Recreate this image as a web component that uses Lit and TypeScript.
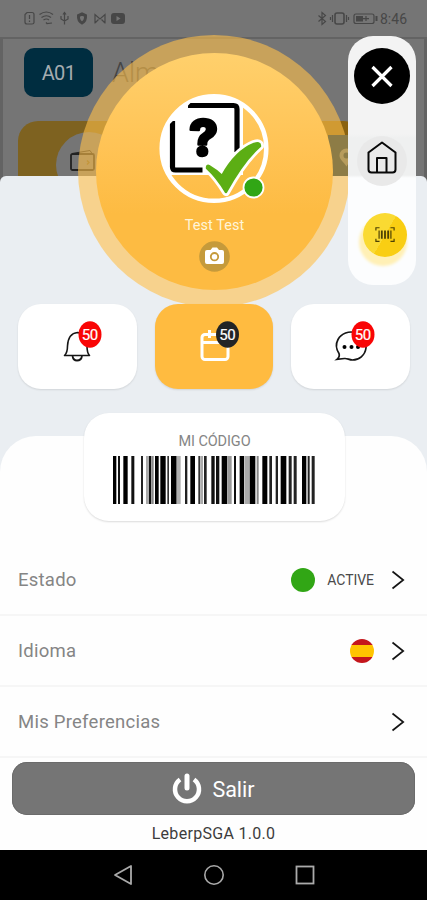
import { LitElement, html, css, svg } from "lit";
import { customElement, property } from "lit/decorators.js";

// [start, width, shade] in thirds of a pixel
const BARS: [number, number, string][] = [
  [0, 10, "#000"], [15, 6, "#111"], [31, 13, "#000"], [55, 9, "#111"], [84, 6, "#222"],
  [99, 6, "#aaa"], [107, 8, "#111"], [116, 6, "#888"], [126, 11, "#000"], [142, 16, "#000"],
  [163, 5, "#333"], [174, 17, "#000"], [191, 12, "#b0b0b0"], [216, 7, "#222"], [232, 14, "#000"],
  [256, 6, "#333"], [264, 6, "#aaa"], [273, 8, "#222"], [295, 10, "#111"], [309, 10, "#111"],
  [326, 17, "#000"], [345, 11, "#999"], [363, 6, "#111"], [380, 13, "#000"], [394, 15, "#aaa"],
  [410, 17, "#000"], [431, 6, "#888"], [448, 15, "#000"], [469, 8, "#222"], [488, 7, "#222"],
  [503, 17, "#000"], [527, 9, "#222"], [542, 9, "#222"], [567, 13, "#000"], [584, 6, "#222"],
  [596, 9, "#222"],
];

@customElement("notice-tile")
class NoticeTile extends LitElement {
  @property() kind = "bell";
  static styles = css`
    :host { display: block; flex: 1; height: 85px; }
    .tile { height: 85px; border-radius: 23px; background: #fff; box-shadow: 0 1px 2px #0000001c; display: flex; justify-content: center; }
    .accent { background: #ffbb40; }
    .icon { width: 44px; height: 46px; margin: 17px 0 0 7px; }
    .badge { fill: #f90505; }
    .dark { fill: #222426; }
    text { font: 400 15px Roboto, sans-serif; fill: #fff; stroke: #fff; stroke-width: .2px; text-anchor: middle; letter-spacing: -.6px; }
  `;
  render() {
    const art =
      this.kind === "bell"
        ? svg`<path d="M5.500 34.500h25c-2-2-2.500-5-2.500-9.500-.500-9-4-13-9.500-13.500-6 .5-9.500 4.500-10 13.500 0 5-.8 7.500-3 9.500z" fill="none" stroke="#151515" stroke-width="1.600" stroke-linejoin="round"/>
              <path d="M13.500 35c.5 3 2 4.500 4.500 4.500s4.500-1.500 5-4.500" fill="none" stroke="#151515" stroke-width="1.800"/>`
        : this.kind === "calendar"
          ? svg`<g fill="none" stroke="#fff" stroke-width="3"><rect x="6" y="13.500" width="26" height="25" rx="3"/><path d="M6 21.500h26M13.500 9v8M24.500 8v9"/></g>`
          : svg`<path d="M7 32.500C4 28 3.600 23 6 18.500c3.500-6.500 11-8.500 17-7 7 2 11.500 8 11 15.500-1 7.500-7 12-13.500 12-3.500 0-5-1.800-8-1.500l-7.500.8c2.200-1.800 2.800-3.500 2-5.800z" fill="none" stroke="#151515" stroke-width="1.700"/>
              <circle cx="12.500" cy="26" r="2"/><circle cx="19.500" cy="26" r="2"/><circle cx="26" cy="26" r="2"/>`;
    const cx = this.kind === "calendar" ? 31.5 : 31;
    return html`<div class="tile ${this.kind === "calendar" ? "accent" : ""}">
      <svg class="icon" viewBox="0 0 44 46">${art}
        <ellipse class="badge ${this.kind === "calendar" ? "dark" : ""}" cx=${cx} cy="13.500" rx="11.500" ry="13.200"/>
        <text x=${cx - 0.3} y="19">50</text>
      </svg></div>`;
  }
}

@customElement("option-row")
class OptionRow extends LitElement {
  @property() label = "";
  static styles = css`
    :host { display: flex; align-items: center; box-sizing: border-box; height: 71px; padding: 0 22px 0 18px; border-bottom: 2px solid #f6f6f6; font-family: Roboto, sans-serif; }
    .label { flex: 1; font-size: 18.500px; letter-spacing: .25px; color: #858585; padding-top: 1px; }
    .arrow { width: 14px; height: 20px; margin-left: 16px; }
  `;
  render() {
    return html`<span class="label">${this.label}</span><slot></slot>
      <svg class="arrow" viewBox="0 0 14 20"><path d="M1.500 1.500 12.200 10 1.500 18.500" fill="none" stroke="#151515" stroke-width="1.700"/></svg>`;
  }
}

@customElement("app-root")
class AppRoot extends LitElement {
  static styles = css`
    :host { display: block; position: relative; width: 427px; height: 900px; overflow: hidden; font-family: Roboto, sans-serif; }
    * { box-sizing: border-box; }
    .screen { display: flex; flex-direction: column; height: 900px; overflow: hidden; background: #757575; }
    .status { display: flex; justify-content: space-between; height: 37px; padding: 8px 20px 0 22px; }
    .marks { opacity: .85; }
    .status-right { display: flex; align-items: center; height: 21px; color: #474747; font-size: 14px; }
    .behind { height: 149px; margin-bottom: -10px; border: solid #636363; border-width: 2px 3px 0 3px; padding: 9px 15px 0 21px; overflow: hidden; }
    .head { display: flex; align-items: center; gap: 19px; }
    .code { width: 69px; height: 49px; border-radius: 10px; background: #002d40; color: #a4acb0; font-size: 20px; letter-spacing: -.6px; display: flex; align-items: center; justify-content: center; padding-top: 1px; }
    .title { font-size: 27px; color: #444; font-weight: 300; }
    .banner { margin: 24px 45px 0 -6px; height: 70px; border-radius: 20px 20px 0 0; background: linear-gradient(90deg, #7e6220 50%, #8a6210 90%); padding: 11px 0 0 38px; display: flex; }
    .disc { width: 66px; height: 66px; border-radius: 50%; background: #757575; padding: 17px 0 0 14px; }
    .sheet { flex: 1; display: flex; flex-direction: column; background: #eaeef2; border-radius: 6px 6px 0 0; position: relative; }
    .tiles { display: flex; gap: 18px; padding: 128px 17px 0 18px; position: relative; z-index: 2; }
    .panel { flex: 1; margin-top: 47px; border-radius: 36px 36px 0 0; background: #fefefe; display: flex; flex-direction: column; }
    .card { width: 261px; height: 108px; margin: -23px auto 0 84px; border-radius: 25px; background: #fff; box-shadow: 0 1px 2px #00000024; display: flex; flex-direction: column; align-items: center; padding-top: 20px; flex: none; }
    .card-title { font-size: 14.500px; line-height: 17px; letter-spacing: -.1px; color: #858585; }
    .bars { width: 202px; height: 48px; margin: 6px 2px 0 0; }
    .rows { margin-top: 24px; }
    .dot { width: 24px; height: 24px; border-radius: 50%; background: #31a615; }
    .state { font-size: 14px; letter-spacing: -.05px; color: #4a4a4a; margin: 1px 1px 0 12px; }
    .flag { width: 24px; height: 24px; border-radius: 50%; background: linear-gradient(#c4161c 0 6px, #ffc400 6px 18px, #c4161c 18px); margin-right: 1px; }
    .exit { display: flex; align-items: center; justify-content: center; height: 53px; margin: 4px 12px 0; border-radius: 15px; background: #757575; box-shadow: inset 0 0 0 1px #6b6b6b; color: #fff; font-size: 21.500px; gap: 10px; }
    .exit span { padding-top: 2px; }
    .version { text-align: center; font-size: 16px; letter-spacing: .3px; line-height: 20px; margin-top: 9px; color: #3c3c3c; }
    .nav { height: 50px; background: #000; display: flex; justify-content: center; align-items: center; gap: 69px; }
    .halo { position: absolute; z-index: 1; left: 78px; top: 35px; width: 272px; height: 272px; border-radius: 50%; background: #ffbf4999; }
    .pin { position: absolute; z-index: 1; left: 328px; top: 135px; width: 24px; height: 41px; }
    .profile { position: absolute; z-index: 1; left: 96px; top: 53px; width: 237px; height: 237px; border-radius: 50%; background: linear-gradient(#ffd06c, #ffc355 40%, #fdbb42 68%); display: flex; flex-direction: column; align-items: center; padding-top: 39px; }
    .avatar { width: 116px; height: 114px; margin-right: 2px; flex: none; }
    .name { margin-top: 11px; font-size: 14.500px; line-height: 18px; letter-spacing: .05px; color: #fff5d9; }
    .camera { margin-top: 6px; width: 31px; height: 31px; }
    .tools { position: absolute; z-index: 3; left: 348px; top: 36px; width: 68px; height: 249px; border-radius: 25px; background: linear-gradient(#f3f3f3 0 98px, #eff0f0 102px 139px, #fcfdfe 142px); display: flex; flex-direction: column; align-items: center; padding-top: 12px; }
    .home { width: 50px; height: 50px; border-radius: 50%; background: #e9e9e9; margin-top: 32px; padding: 2px 6px; }
    .scan { width: 44px; height: 44px; margin: 27px 0 0 5px; border-radius: 50%; background: linear-gradient(120deg, #fada32 50%, #f9ce13 50%); box-shadow: -2px 7px 3px 2px #fff0b6; padding: 12px 11px; }
    .scan svg { display: block; }
  `;
  render() {
    return html`<div class="screen">
      <div class="status">
        <svg class="marks" width="106" height="21" viewBox="22 8 106 21" fill="none" stroke="#404040" stroke-width="1.200">
          <path d="M27 12.500h5q2 0 2 2v8q0 1.500-2 1.500h-5q-2 0-2-2v-7.500z M29.500 15v4M29.500 20.500v1.500"/>
          <path d="M39.500 14.500q7-5 13.500 0M41.500 17.500q5-3.500 9.500 0M43.500 20q3-2 5.500 0M46 22.500l1 1 5-.500"/>
          <path d="M64.500 12.500v12M61 16v3l3.500 2 3.500-2v-3M63 14.500l1.500-2 1.500 2"/>
          <path d="M82 14l3.500 1.500q.5 5.500-3.500 7.500-4-2-3.500-7.500z" stroke-width="3"/>
          <path d="M95 23.500v-9l5 4.500 5-4.500v9M95.500 22.500l3-3M104.500 22.500l-3-3"/>
          <rect x="111" y="13" width="14" height="11" rx="3" fill="#404040" stroke="none"/><path d="m116.500 16 4 2.500-4 2.500z" fill="#757575" stroke="none"/>
        </svg>
        <span class="status-right">
          <svg class="marks" width="64" height="21" viewBox="313 8 64 21" fill="none" stroke="#404040" stroke-width="1.200">
            <path d="M315.500 15.500l7 6-3.500 3V12.500l3.500 3-7 6"/>
            <rect x="332" y="13" width="9" height="11" rx="2" stroke-width="1.600"/><path d="M329.500 15v7M343.500 15v7M327.500 17v3M345.500 17v3"/>
            <rect x="351" y="14" width="20" height="9.500" rx="2"/><path d="M373.500 16v5" stroke-width="2"/><path d="M353 16h7v5.500h-7z" fill="#404040" stroke="none"/><path d="M358 18.700h8M363 16v5"/>
          </svg>8:46</span>
      </div>
      <div class="behind">
        <div class="head"><span class="code">A01</span><span class="title">Almacén</span></div>
        <div class="banner"><div class="disc">
          <svg width="27" height="25" viewBox="0 0 27 25" fill="none" stroke="#222" stroke-width="1.800"><rect x="1" y="5" width="23" height="16" rx="1.500"/><path d="M2 4.500 20 1.500l2 3" stroke-width="1"/><path d="M17 11.500l2 2-2 2" stroke="#6d5a25" stroke-width="1.300"/></svg>
        </div></div>
      </div>
      <div class="sheet">
        <div class="tiles"><notice-tile kind="bell"></notice-tile><notice-tile kind="calendar"></notice-tile><notice-tile kind="chat"></notice-tile></div>
        <div class="panel">
          <div class="card"><span class="card-title">MI CÓDIGO</span>
            <svg class="bars" viewBox="0 0 606 144" preserveAspectRatio="none">${BARS.map(([x, w, c]) => svg`<rect x=${x} y="0" width=${w} height="144" fill=${c}/>`)}</svg>
          </div>
          <div class="rows">
            <option-row label="Estado"><span class="dot"></span><span class="state">ACTIVE</span></option-row>
            <option-row label="Idioma"><span class="flag"></span></option-row>
            <option-row label="Mis Preferencias"></option-row>
          </div>
          <div class="exit">
            <svg width="30" height="32" viewBox="0 0 30 32" fill="none" stroke="#fff" stroke-width="4.500"><path d="M8 6.500a12 12 0 1 0 14 0"/><path d="M15 3v12" stroke-width="5" stroke-linecap="round"/></svg>
            <span>Salir</span></div>
          <div class="version">LeberpSGA 1.0.0</div>
        </div>
      </div>
      <div class="nav">
        <svg width="22" height="22" viewBox="0 0 22 22" fill="none" stroke="#aaa" stroke-width="1.800"><path d="M19 2v18L3 11z" stroke-linejoin="round"/></svg>
        <svg width="22" height="22" viewBox="0 0 22 22" fill="none" stroke="#aaa" stroke-width="1.600"><circle cx="11" cy="11" r="9.200"/></svg>
        <svg width="22" height="22" viewBox="0 0 22 22" fill="none" stroke="#aaa" stroke-width="1.800"><rect x="2.500" y="2.500" width="17" height="17"/></svg>
      </div>
    </div>
    <div class="halo"></div>
    <svg class="pin" viewBox="0 0 24 41"><path d="M0 0h24v41H0z" fill="#8d7c46"/><path d="M18.500 13.500a7 7 0 0 0-7 7c0 4 4 6 7 11 3-5 7-7 7-11a7 7 0 0 0-7-7z" fill="#b79c5c"/><circle cx="18.500" cy="20.500" r="3" fill="#8d7c46"/></svg>
    <div class="profile">
      <svg class="avatar" viewBox="156 92 116 114">
        <defs><clipPath id="face"><circle cx="214" cy="148.500" r="53"/></clipPath></defs>
        <g clip-path="url(#face)"><path d="M155 90h88v85h-88z" fill="#fff"/></g>
        <circle cx="214" cy="148.500" r="52.300" fill="none" stroke="#fff" stroke-width="4.500"/>
        <g fill="none" stroke="#000" stroke-width="5.200"><path d="M188 105.500h45.500q3.500 0 3.500 3.500v43"/><path d="M172.500 121v46q0 3 3 3h27"/></g>
        <path d="M166 128 191 102.500v-6h-25z" fill="#fff" clip-path="url(#face)"/>
        <text x="203.500" y="156" text-anchor="middle" font-family="Inter, sans-serif" font-weight="800" font-size="51" stroke="#000" stroke-width="2.500" stroke-linejoin="round">?</text>
        <path d="M209 166q7 4 13 10 14-25 32-32 6-2 6 2-17 15-34 46-9-15-19-24 0-3 2-2z" fill="#5cae14" stroke="#fff" stroke-width="8" stroke-linejoin="round"/>
        <path d="M209 166q7 4 13 10 14-25 32-32 6-2 6 2-17 15-34 46-9-15-19-24 0-3 2-2z" fill="#5cae14" stroke="#5cae14" stroke-width="2.500" stroke-linejoin="round"/>
        <circle cx="253.500" cy="187.500" r="10" fill="#31a615" stroke="#fff" stroke-width="1.800"/>
      </svg>
      <span class="name">Test Test</span>
      <svg class="camera" viewBox="0 0 31 31"><circle cx="15.500" cy="15.500" r="15.300" fill="#c59a3b"/><path d="M8 9h3.500l2-2.500h4.500l2 2.500H23q2 0 2 2v10q0 2-2 2H8q-2 0-2-2V11q0-2 2-2z" fill="#fff"/><circle cx="15.500" cy="15.700" r="3.700" fill="#fff" stroke="#c59a3b" stroke-width="1.800"/></svg>
    </div>
    <div class="tools">
      <svg width="56" height="56" viewBox="0 0 56 56"><circle cx="28" cy="28" r="28"/><path d="M18.500 19l19 19M37.500 19l-19 19" stroke="#fff" stroke-width="3.200"/></svg>
      <div class="home"><svg width="38" height="42" viewBox="0 0 38 42" fill="none" stroke="#080808" stroke-width="2"><path d="M5.500 14.500 19 4.500l13.500 10v17q0 3-3 3h-21q-3 0-3-3zM14 34.500V20h9.500v14.500" stroke-linejoin="round"/></svg></div>
      <div class="scan"><svg width="22" height="20" viewBox="0 0 24 22" fill="none" stroke="#4c4104" stroke-width="1.300"><path d="M2 6V3h4M18 3h4v3M2 15v3h4M22 15v3h-4"/><path d="M5.500 6v9M18.500 6v9"/><path d="M8.500 6v9M12 6v9M15.500 6v9" stroke-width="2"/></svg></div>
    </div>`;
  }
}
